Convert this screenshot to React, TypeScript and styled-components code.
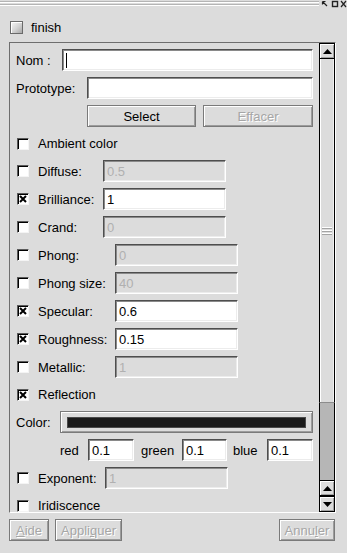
import React from 'react';
import styled, { createGlobalStyle } from 'styled-components';

const GlobalStyle = createGlobalStyle`
  html, body {
    margin: 0;
    padding: 0;
    background: #dcdcdc;
  }
  body {
    font-family: "Liberation Sans", Arial, sans-serif;
    font-size: 13px;
    color: #000;
  }
`;

const Window = styled.div`
  width: 347px;
  height: 553px;
  background: #dcdcdc;
  display: flex;
  flex-direction: column;
  overflow: hidden;
`;

const TitleStrip = styled.div`
  height: 8px;
  display: flex;
  align-items: flex-start;
`;

const Grooves = styled.div`
  width: 319px;
  height: 6px;
  margin-top: 1px;
  background: linear-gradient(
    to bottom,
    #b4b4b4 0,
    #b4b4b4 1px,
    #fff 1px,
    #fff 2px,
    transparent 2px,
    transparent 3px,
    #b4b4b4 3px,
    #b4b4b4 4px,
    #fff 4px,
    #fff 5px,
    transparent 5px
  );
`;

const HeaderRow = styled.div`
  display: flex;
  align-items: center;
  gap: 8px;
  padding: 13px 0 0 10px;
  height: 13px;
  margin-bottom: 8px;
`;

const ToggleBox = styled.div`
  width: 13px;
  height: 13px;
  box-sizing: border-box;
  border: 1px solid #6a6a6a;
  background: linear-gradient(135deg, #f8f8f8 0%, #d2d2d2 55%, #a8a8a8 100%);
  box-shadow: inset 1px 1px 0 #fff;
`;

const Panel = styled.div`
  margin-left: 9px;
  width: 327px;
  height: 471px;
  box-sizing: border-box;
  border: 1px solid;
  border-color: #6e6e6e #fff #fff #6e6e6e;
  display: flex;
`;

const Content = styled.div`
  flex: 1;
  overflow: hidden;
  padding: 6px 6px 0 6px;
  display: flex;
  flex-direction: column;
  gap: 6px;
`;

const Row = styled.div<{ h?: number; indent?: number }>`
  display: flex;
  align-items: center;
  flex-shrink: 0;
  height: ${(p) => p.h ?? 22}px;
  padding-left: ${(p) => p.indent ?? 0}px;
`;

const Label = styled.span<{ w?: number; disabled?: boolean }>`
  display: inline-block;
  flex-shrink: 0;
  width: ${(p) => (p.w ? `${p.w}px` : 'auto')};
  white-space: nowrap;
  color: ${(p) => (p.disabled ? '#a8a8a8' : '#000')};
`;

const Field = styled.div<{ w: number; disabled?: boolean }>`
  width: ${(p) => p.w}px;
  height: 22px;
  flex-shrink: 0;
  box-sizing: border-box;
  border: 1px solid;
  border-color: #4e4e4e #fff #fff #4e4e4e;
  box-shadow: inset 1px 1px 0 #8a8a8a, inset -1px -1px 0 #ececec;
  background: ${(p) => (p.disabled ? '#dcdcdc' : '#fff')};
  color: ${(p) => (p.disabled ? '#b0b0b0' : '#000')};
  padding: 0 3px;
  display: flex;
  align-items: center;
  white-space: nowrap;
`;

const Caret = styled.span`
  display: inline-block;
  width: 1px;
  height: 15px;
  background: #000;
  margin-left: 0px;
`;

const Button = styled.div<{ w: number; disabled?: boolean; ml?: number }>`
  width: ${(p) => p.w}px;
  height: 22px;
  margin-left: ${(p) => p.ml ?? 0}px;
  flex-shrink: 0;
  box-sizing: border-box;
  border: 1px solid #7a7a7a;
  box-shadow: inset 1px 1px 0 #fff, inset -1px -1px 0 #9c9c9c;
  background: #dcdcdc;
  display: flex;
  align-items: center;
  justify-content: center;
  color: ${(p) => (p.disabled ? '#a6a6a6' : '#000')};
  text-shadow: ${(p) => (p.disabled ? '1px 1px 0 #fff' : 'none')};
`;

const ColorButton = styled(Button)`
  padding: 0 6px;
`;

const Swatch = styled.div<{ color: string }>`
  flex: 1;
  height: 9px;
  background: ${(p) => p.color};
  border: 1px solid #4a4a4a;
`;

const Check = styled.div`
  width: 12px;
  height: 12px;
  flex-shrink: 0;
  box-sizing: border-box;
  margin: 0 9px 0 1px;
  background: #fff;
  border: 1px solid;
  border-color: #5a5a5a #f4f4f4 #f4f4f4 #5a5a5a;
  box-shadow: inset 1px 1px 0 #000;
  display: flex;
  align-items: center;
  justify-content: center;
`;

const Scrollbar = styled.div`
  width: 16px;
  flex-shrink: 0;
  display: flex;
  flex-direction: column;
`;

const ArrowButton = styled.div`
  height: 16px;
  flex-shrink: 0;
  box-sizing: border-box;
  border: 1px solid #000;
  background: #dcdcdc;
  box-shadow: inset 1px 1px 0 #fff, inset -1px -1px 0 #a0a0a0;
  display: flex;
  align-items: center;
  justify-content: center;
`;

const Thumb = styled.div`
  flex: 1;
  box-sizing: border-box;
  border-left: 1px solid #000;
  border-right: 1px solid #000;
  border-bottom: 1px solid #8c8c8c;
  background: #dcdcdc;
  box-shadow: inset 1px 0 0 #fff, inset -1px 0 0 #f0f0f0;
  display: flex;
  flex-direction: column;
  align-items: center;
  justify-content: center;
  gap: 1px;
`;

const Grip = styled.div`
  width: 10px;
  height: 1px;
  border-bottom: 1px solid #a4a4a4;
  background: #fff;
`;

const Trough = styled.div`
  height: 77px;
  flex-shrink: 0;
  box-sizing: border-box;
  border-left: 1px solid #000;
  border-right: 1px solid #000;
  background: #b6b6b6;
`;

const Footer = styled.div`
  display: flex;
  align-items: center;
  gap: 6px;
  padding: 6px 12px 0 9px;
`;

const Spacer = styled.div`
  flex: 1;
`;

const Key = styled.span`
  text-decoration: underline;
`;

const Cross = () => (
  <svg width="8" height="8" viewBox="0 0 8 8">
    <path d="M1 1 L7 7 M7 1 L1 7" stroke="#000" strokeWidth="2" />
  </svg>
);

const Arrow = ({ down }: { down?: boolean }) => (
  <svg width="9" height="5" viewBox="0 0 9 5">
    <path d={down ? 'M0 0 H9 L4.5 5 Z' : 'M0 5 H9 L4.5 0 Z'} fill="#000" />
  </svg>
);

const WindowIcons = () => (
  <svg width="26" height="8" viewBox="0 0 26 8" style={{ marginLeft: 2 }}>
    <path d="M1.5 1.5 L6 6 M1.5 1.5 H4.5 M1.5 1.5 V4.5" stroke="#222" strokeWidth="1.2" fill="none" />
    <rect x="11.5" y="1.5" width="5" height="5" stroke="#222" strokeWidth="1.4" fill="none" />
    <path d="M20 1 L25 7 M25 1 L20 7" stroke="#222" strokeWidth="1.2" />
  </svg>
);

type Opt = { label: string; value: string; on: boolean; w: number };

const group1: Opt[] = [
  { label: 'Diffuse:', value: '0.5', on: false, w: 65 },
  { label: 'Brilliance:', value: '1', on: true, w: 65 },
  { label: 'Crand:', value: '0', on: false, w: 65 },
];

const group2: Opt[] = [
  { label: 'Phong:', value: '0', on: false, w: 77 },
  { label: 'Phong size:', value: '40', on: false, w: 77 },
  { label: 'Specular:', value: '0.6', on: true, w: 77 },
  { label: 'Roughness:', value: '0.15', on: true, w: 77 },
  { label: 'Metallic:', value: '1', on: false, w: 77 },
];

const OptRow = ({ opt }: { opt: Opt }) => (
  <Row>
    <Check>{opt.on && <Cross />}</Check>
    <Label w={opt.w}>{opt.label}</Label>
    <Field w={123} disabled={!opt.on}>
      {opt.value}
    </Field>
  </Row>
);

const App = (): JSX.Element => (
  <>
    <GlobalStyle />
    <Window>
      <TitleStrip>
        <Grooves />
        <WindowIcons />
      </TitleStrip>
      <HeaderRow>
        <ToggleBox />
        <span>finish</span>
      </HeaderRow>
      <Panel>
        <Content>
          <Row>
            <Label w={46}>Nom :</Label>
            <Field w={251}>
              <Caret />
            </Field>
          </Row>
          <Row>
            <Label w={71}>Prototype:</Label>
            <Field w={226} />
          </Row>
          <Row>
            <Button w={109} ml={71}>
              Select
            </Button>
            <Button w={110} ml={7} disabled>
              Effacer
            </Button>
          </Row>
          <Row h={21}>
            <Check />
            <Label>Ambient color</Label>
          </Row>
          {group1.map((o) => (
            <OptRow key={o.label} opt={o} />
          ))}
          {group2.map((o) => (
            <OptRow key={o.label} opt={o} />
          ))}
          <Row h={21}>
            <Check>
              <Cross />
            </Check>
            <Label>Reflection</Label>
          </Row>
          <Row>
            <Label w={44}>Color:</Label>
            <ColorButton w={253}>
              <Swatch color="#1a1a1a" />
            </ColorButton>
          </Row>
          <Row indent={44}>
            <Label w={28}>red</Label>
            <Field w={46}>0.1</Field>
            <Label w={41} style={{ paddingLeft: 7 }}>green</Label>
            <Field w={45}>0.1</Field>
            <Label w={34} style={{ paddingLeft: 6 }}>blue</Label>
            <Field w={46}>0.1</Field>
          </Row>
          <Row>
            <Check />
            <Label w={67}>Exponent:</Label>
            <Field w={123} disabled>
              1
            </Field>
          </Row>
          <Row h={21}>
            <Check />
            <Label>Iridiscence</Label>
          </Row>
        </Content>
        <Scrollbar>
          <ArrowButton>
            <Arrow />
          </ArrowButton>
          <Thumb>
            <Grip />
            <Grip />
            <Grip />
          </Thumb>
          <Trough />
          <ArrowButton>
            <Arrow />
          </ArrowButton>
          <ArrowButton>
            <Arrow down />
          </ArrowButton>
        </Scrollbar>
      </Panel>
      <Footer>
        <Button w={40} disabled>
          <Key>A</Key>ide
        </Button>
        <Button w={67} disabled>
          Appli<Key>q</Key>uer
        </Button>
        <Spacer />
        <Button w={56} disabled>
          Annu<Key>l</Key>er
        </Button>
      </Footer>
    </Window>
  </>
);

export default App;
